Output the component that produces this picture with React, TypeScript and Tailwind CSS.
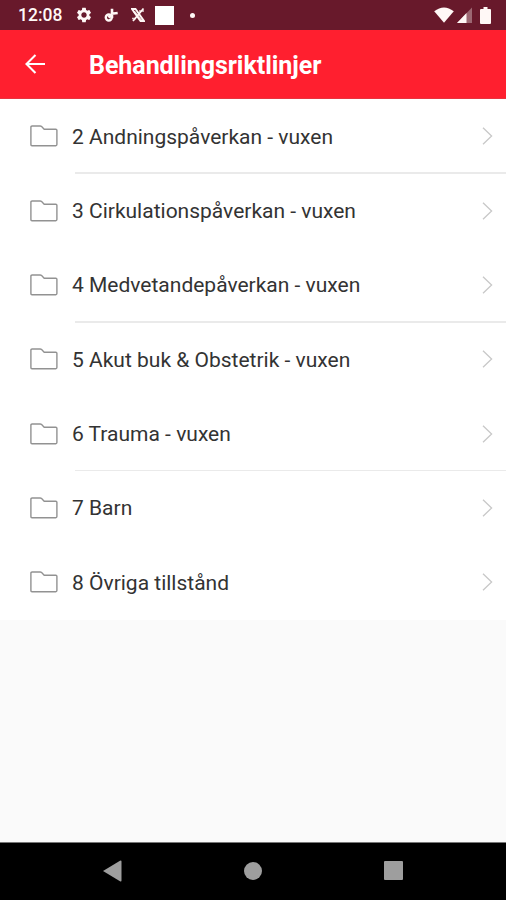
import { MdSettings } from "react-icons/md";

const items = [
  { label: "2 Andningspåverkan - vuxen", divider: true },
  { label: "3 Cirkulationspåverkan - vuxen", divider: false },
  { label: "4 Medvetandepåverkan - vuxen", divider: true },
  { label: "5 Akut buk & Obstetrik - vuxen", divider: false },
  { label: "6 Trauma - vuxen", divider: true },
  { label: "7 Barn", divider: false },
  { label: "8 Övriga tillstånd", divider: false },
];

function StatusBar() {
  return (
    <div className="flex h-[30px] shrink-0 items-center bg-[#68192b] pl-[18px] pr-[15px] text-[#fff8f6]">
      <span className="w-[57px] pt-[2px] text-[17.5px] font-medium leading-none">12:08</span>
      <MdSettings className="size-[18px]" />
      <svg className="ml-[11px] h-[16px] w-[15px]" viewBox="0 0 15 16" fill="none" stroke="currentColor">
        <circle cx="4.8" cy="10.5" r="3" strokeWidth="2.4" />
        <path d="M8 11V1.8M7.4 6.8l6.3-.8M4.5 10.5l4-3.5" strokeWidth="2.6" />
      </svg>
      <svg className="ml-[12px] h-[16px] w-[14px]" viewBox="0 0 14 16" fill="none" stroke="currentColor">
        <path d="M1 2h3.5L13 14H9.5zM12.5 1.5 2 14" strokeWidth="1.8" />
        <path d="M3 4.5l7.5 9" strokeWidth="2" opacity=".75" />
        <path d="M8 4h5M1 11.5h4" strokeWidth="1.5" opacity=".8" />
      </svg>
      <span className="ml-[10px] size-[19px] bg-white" />
      <span className="ml-[16px] size-[5px] rounded-full bg-current" />
      <div className="ml-auto flex items-center">
        <svg className="h-[16px] w-[20px]" viewBox="0 0 20 16" fill="currentColor">
          <path d="M.2 4.2Q10-3.4 19.8 4.2L10 15.7z" />
        </svg>
        <svg className="ml-[3px] h-[16px] w-[15px]" viewBox="0 0 15 16" fill="currentColor">
          <path d="M0 16 15 .5V16z" opacity=".35" />
          <path d="M0 16 9.5 6v10z" />
        </svg>
        <svg className="ml-[8px] h-[17px] w-[11px]" viewBox="0 0 11 17" fill="currentColor">
          <path d="M3.5 0h4v2H10q1 0 1 1v13q0 1-1 1H1q-1 0-1-1V3q0-1 1-1h2.5z" />
        </svg>
      </div>
    </div>
  );
}

function AppBar() {
  return (
    <header className="flex h-[69px] shrink-0 items-center border-b border-[#e8343f] bg-[#ff1f2f] pl-[25px] text-white">
      <svg className="h-[20px] w-[20px]" viewBox="0 0 20 20" fill="none" stroke="currentColor" strokeWidth="2.1">
        <path d="M20 10H2M10.5 1 1.5 10l9 9" />
      </svg>
      <h1 className="ml-[44px] whitespace-nowrap pt-[3px] text-[25px] font-bold leading-none tracking-[-0.05px]">
        Behandlingsriktlinjer
      </h1>
    </header>
  );
}

function Row({ label, divider }: { label: string; divider: boolean }) {
  return (
    <li className="flex h-[74.35px] flex-col">
      <div className="flex flex-1 items-center pl-[30px] pr-[13px] pt-px">
        <svg className="h-[22px] w-[28px]" viewBox="0 0 28 22" fill="none" stroke="#929292" strokeWidth="1.4">
          <path d="M.9 2.2Q.9 1 2.1 1h8q.9 0 1.5.6l2.6 2.6h11.6q1.1 0 1.1 1.1v14.3q0 1.1-1.1 1.1H2q-1.1 0-1.1-1.1z" />
        </svg>
        <span className="ml-[14px] flex-1 whitespace-nowrap pt-[1.5px] text-[21px] leading-none text-[#333]">{label}</span>
        <svg className="h-[18px] w-[11px]" viewBox="0 0 11 18" fill="none" stroke="#c8c8c8" strokeWidth="1.3">
          <path d="M1 .8 9.6 9 1 17.2" />
        </svg>
      </div>
      <div className={divider ? "ml-[75px] h-[1.5px] bg-[#eaeaea]" : "h-[1.5px]"} />
    </li>
  );
}

function NavigationBar() {
  return (
    <nav className="flex h-[58px] shrink-0 items-center border-t border-[#777] bg-black pb-[2px] pl-[103px] text-[#9e9e9e]">
      <svg className="h-[22px] w-[19px]" viewBox="0 0 19 22" fill="currentColor">
        <path d="M0 11 17 .8q1.5-.8 1.5.8v18.8q0 1.6-1.5.8z" />
      </svg>
      <span className="ml-[122px] size-[18px] rounded-full bg-current" />
      <span className="ml-[122px] size-[19px] rounded-[1px] bg-current" />
    </nav>
  );
}

export default function App() {
  return (
    <div className="flex h-[900px] w-full flex-col overflow-hidden bg-[#fafafa] font-[Roboto,sans-serif]">
      <StatusBar />
      <AppBar />
      <main className="flex-1">
        <ul className="bg-white pt-[0.5px]">
          {items.map((item) => (
            <Row key={item.label} {...item} />
          ))}
        </ul>
      </main>
      <NavigationBar />
    </div>
  );
}
